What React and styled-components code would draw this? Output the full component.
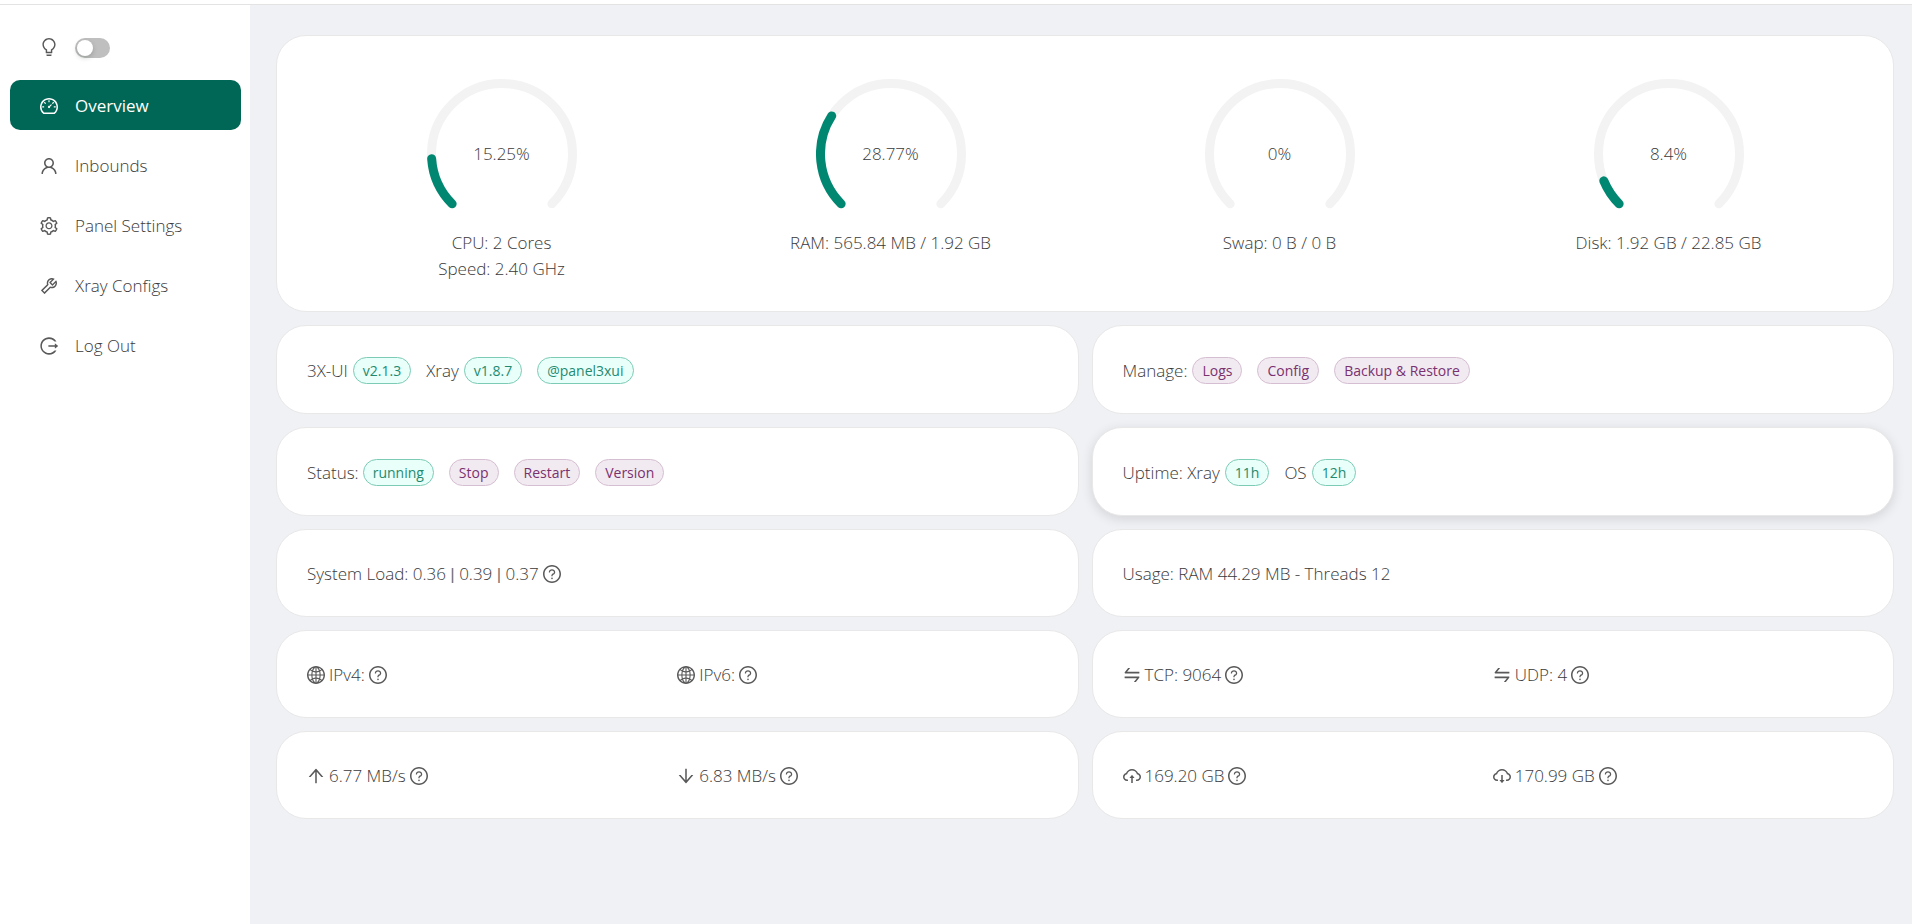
import React, { useState } from "react";
import styled, { createGlobalStyle, css } from "styled-components";
import {
  AiOutlineArrowDown,
  AiOutlineArrowUp,
  AiOutlineBulb,
  AiOutlineCloudDownload,
  AiOutlineCloudUpload,
  AiOutlineDashboard,
  AiOutlineGlobal,
  AiOutlineLogout,
  AiOutlineQuestionCircle,
  AiOutlineSetting,
  AiOutlineSwap,
  AiOutlineTool,
  AiOutlineUser,
} from "react-icons/ai";

const menu = [
  { label: "Overview", icon: AiOutlineDashboard },
  { label: "Inbounds", icon: AiOutlineUser },
  { label: "Panel Settings", icon: AiOutlineSetting },
  { label: "Xray Configs", icon: AiOutlineTool },
  { label: "Log Out", icon: AiOutlineLogout },
];

const gauges = [
  { percent: 15.25, lines: ["CPU: 2 Cores", "Speed: 2.40 GHz"] },
  { percent: 28.77, lines: ["RAM: 565.84 MB / 1.92 GB"] },
  { percent: 0, lines: ["Swap: 0 B / 0 B"] },
  { percent: 8.4, lines: ["Disk: 1.92 GB / 22.85 GB"] },
];

// the outline icons leave a 64 unit margin, crop it so they fill their box
const Icon = ({ as: Glyph, color = "#595959" }) => (
  <Glyph size={18} color={color} viewBox="64 64 896 896" aria-hidden="true" />
);

const Help = ({ label }) => (
  <StHelp type="button" aria-label={label}>
    <Icon as={AiOutlineQuestionCircle} />
  </StHelp>
);

const Gauge = ({ percent, lines }) => {
  const length = (percent / 100) * 270;

  return (
    <StGauge>
      <StDial>
        <svg width="150" height="150" viewBox="0 0 100 100" aria-hidden="true">
          <g
            fill="none"
            strokeWidth="6"
            strokeLinecap="round"
            transform="rotate(135 50 50)"
          >
            <circle
              cx="50"
              cy="50"
              r="47"
              stroke="#f3f3f3"
              pathLength="360"
              strokeDasharray="270 360"
            />
            {percent > 0 && (
              <circle
                cx="50"
                cy="50"
                r="47"
                stroke="#008771"
                pathLength="360"
                strokeDasharray={`${length} 360`}
              />
            )}
          </g>
        </svg>
        <span>{percent}%</span>
      </StDial>
      {lines.map((line) => (
        <div key={line}>{line}</div>
      ))}
    </StGauge>
  );
};

const Stat = ({ icon, text, help }) => (
  <StItem>
    <Icon as={icon} />
    {text}
    <Help label={help} />
  </StItem>
);

const Sidebar = () => {
  const [dark, setDark] = useState(false);

  return (
    <StSidebar>
      <StTheme>
        <Icon as={AiOutlineBulb} />
        <StSwitch
          type="checkbox"
          role="switch"
          aria-label="Dark theme"
          checked={dark}
          onChange={() => setDark(!dark)}
        />
      </StTheme>
      <StMenu>
        {menu.map(({ label, icon }) => (
          <StMenuItem key={label} href="#" $active={label === "Overview"}>
            <Icon
              as={icon}
              color={label === "Overview" ? "#ffffff" : undefined}
            />
            {label}
          </StMenuItem>
        ))}
      </StMenu>
    </StSidebar>
  );
};

const App = () => {
  return (
    <>
      <GlobalStyle />
      <StPage>
        <Sidebar />
        <StMain>
          <StCard $wide>
            <StGauges>
              {gauges.map((gauge) => (
                <Gauge key={gauge.lines[0]} {...gauge} />
              ))}
            </StGauges>
          </StCard>

          <StCard>
            <StTags>
              <StItem $gap={5}>
                3X-UI
                <StTag as="a" href="#">
                  v2.1.3
                </StTag>
              </StItem>
              <StItem $gap={5}>
                Xray
                <StTag as="span">v1.8.7</StTag>
              </StItem>
              <StTag as="a" href="#">
                @panel3xui
              </StTag>
            </StTags>
          </StCard>
          <StCard>
            <StTags>
              <StItem $gap={5}>
                Manage:
                <StTag $purple>Logs</StTag>
              </StItem>
              <StTag $purple>Config</StTag>
              <StTag $purple>Backup &amp; Restore</StTag>
            </StTags>
          </StCard>

          <StCard>
            <StTags>
              <StItem>
                Status:
                <StTag as="span">running</StTag>
              </StItem>
              <StTag $purple>Stop</StTag>
              <StTag $purple>Restart</StTag>
              <StTag $purple>Version</StTag>
            </StTags>
          </StCard>
          <StCard $raised>
            <StTags>
              <StItem $gap={5}>
                Uptime: Xray
                <StTag as="span">11h</StTag>
              </StItem>
              <StItem $gap={5}>
                OS
                <StTag as="span">12h</StTag>
              </StItem>
            </StTags>
          </StCard>

          <StCard>
            <StItem>
              <span>
                System Load: 0.36 <StPipe>|</StPipe> 0.39 <StPipe>|</StPipe>{" "}
                0.37
              </span>
              <Help label="About system load" />
            </StItem>
          </StCard>
          <StCard>Usage: RAM 44.29 MB - Threads 12</StCard>

          <StCard>
            <StHalves>
              <Stat icon={AiOutlineGlobal} text="IPv4:" help="About IPv4" />
              <Stat icon={AiOutlineGlobal} text="IPv6:" help="About IPv6" />
            </StHalves>
          </StCard>
          <StCard>
            <StHalves>
              <Stat icon={AiOutlineSwap} text="TCP: 9064" help="About TCP" />
              <Stat icon={AiOutlineSwap} text="UDP: 4" help="About UDP" />
            </StHalves>
          </StCard>

          <StCard>
            <StHalves>
              <Stat
                icon={AiOutlineArrowUp}
                text="6.77 MB/s"
                help="About upload speed"
              />
              <Stat
                icon={AiOutlineArrowDown}
                text="6.83 MB/s"
                help="About download speed"
              />
            </StHalves>
          </StCard>
          <StCard>
            <StHalves>
              <Stat
                icon={AiOutlineCloudUpload}
                text="169.20 GB"
                help="About data sent"
              />
              <Stat
                icon={AiOutlineCloudDownload}
                text="170.99 GB"
                help="About data received"
              />
            </StHalves>
          </StCard>
        </StMain>
      </StPage>
    </>
  );
};

export default App;

const GlobalStyle = createGlobalStyle`
  * {
    box-sizing: border-box;
  }

  body {
    margin: 0;
    background-color: #f0f1f5;
    color: #3a3a3a;
    font-family: "Open Sans", "Noto Sans", sans-serif;
    font-size: 17px;
    font-weight: 300;
    line-height: 26px;
  }

  svg {
    display: block;
    flex-shrink: 0;
  }
`;

const StPage = styled.div`
  display: flex;
  min-height: 100vh;
  border-top: 4px solid #ffffff;
`;

const StSidebar = styled.aside`
  flex: 0 0 250px;
  padding: 0 9px 0 10px;
  border-top: 1px solid #e3e3e3;
  background-color: #ffffff;
`;

const StTheme = styled.div`
  display: flex;
  align-items: flex-start;
  gap: 17px;
  height: 75px;
  padding: 33px 30px 0;
`;

const StSwitch = styled.input`
  appearance: none;
  width: 35px;
  height: 20px;
  margin: 0;
  padding: 2px;
  border-radius: 10px;
  background-color: #bfbfbf;
  cursor: pointer;

  &::before {
    content: "";
    display: block;
    width: 16px;
    height: 16px;
    border-radius: 50%;
    background-color: #ffffff;
    box-shadow: 0 2px 5px rgba(0, 35, 11, 0.2);
  }

  &:checked {
    padding-left: 17px;
    background-color: #008771;
  }
`;

const StMenu = styled.nav`
  display: flex;
  flex-direction: column;
  gap: 10px;
`;

const StMenuItem = styled.a`
  display: flex;
  align-items: center;
  gap: 17px;
  height: 50px;
  padding: 2px 30px 0;
  border-radius: 10px;
  color: inherit;
  text-decoration: none;

  ${({ $active }) =>
    $active &&
    css`
      background-color: #006655;
      color: #ffffff;
      font-weight: 400;
    `}
`;

const StMain = styled.main`
  flex: 1;
  display: grid;
  grid-template-columns: 1fr 1fr;
  align-content: start;
  gap: 13px;
  padding: 30px 18px 30px 26px;
  border-top: 1px solid #e3e3e3;
`;

const StCard = styled.section`
  grid-column: ${({ $wide }) => ($wide ? "1 / -1" : "auto")};
  padding: 31px 30px 29px;
  border: 1px solid #e8e8e8;
  border-radius: 30px;
  background-color: #ffffff;
  box-shadow: ${({ $raised }) =>
    $raised ? "0 3px 12px rgba(0, 0, 0, 0.12)" : "none"};
`;

const StGauges = styled.div`
  display: grid;
  grid-template-columns: repeat(4, 1fr);
  padding-top: 12px;
`;

const StGauge = styled.div`
  display: flex;
  flex-direction: column;
  align-items: center;
`;

const StDial = styled.div`
  display: grid;
  place-items: center;
  margin-bottom: 1px;

  > * {
    grid-area: 1 / 1;
  }
`;

const StTags = styled.div`
  display: flex;
  align-items: center;
  gap: 15px;
`;

const StHalves = styled.div`
  display: grid;
  grid-template-columns: 1fr 1fr;
`;

const StItem = styled.div`
  display: flex;
  align-items: center;
  gap: ${({ $gap = 4 }) => $gap}px;
`;

const StPipe = styled.span`
  color: #737373;
  font-family: "Liberation Sans", sans-serif;
  line-height: 1;
`;

const StHelp = styled.button`
  padding: 0;
  border: none;
  background: none;
  cursor: pointer;
`;

const StTag = styled.button`
  height: 27px;
  padding: 0 9px;
  border: 1px solid ${({ $purple }) => ($purple ? "#d5bed2" : "#7ccbb5")};
  border-radius: 14px;
  background-color: ${({ $purple }) => ($purple ? "#f2eaf1" : "#e9fffa")};
  color: ${({ $purple }) => ($purple ? "#7a316f" : "#1f8a70")};
  font-family: inherit;
  font-size: 14px;
  font-weight: 400;
  line-height: 25px;
  text-decoration: none;
  white-space: nowrap;
`;
